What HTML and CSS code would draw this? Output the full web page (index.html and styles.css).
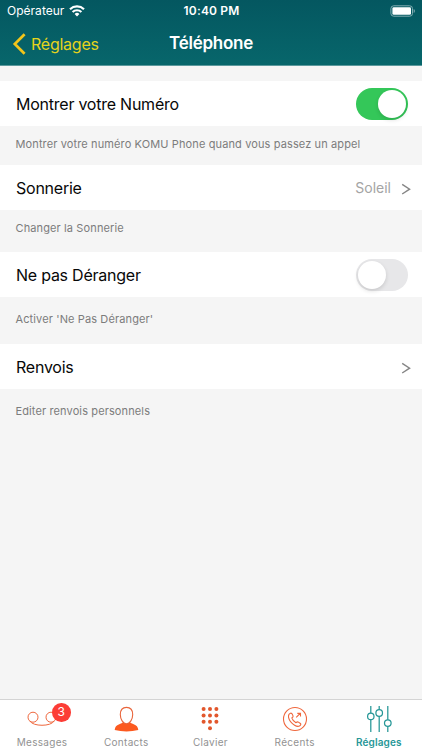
FILE: index.html
```html
<!DOCTYPE html>
<html lang="fr">
<head>
<meta charset="utf-8">
<title>Téléphone</title>
<link rel="stylesheet" href="styles.css">
</head>
<body>
<div class="screen">
  <header class="header">
    <div class="status">
      <div class="carrier"><span>Opérateur</span>
        <svg class="wifi" width="16" height="12" viewBox="0 0 16 12" fill="none" stroke="#fff" stroke-width="2.2"><path d="M1 4.2a10.2 10.2 0 0 1 14 0M3.6 7a6.4 6.4 0 0 1 8.8 0"/><path d="M8 11.4 5.6 9a3.5 3.5 0 0 1 4.8 0z" fill="#fff" stroke="none"/></svg>
      </div>
      <div class="time">10:40 PM</div>
      <svg class="battery" width="26" height="12" viewBox="0 0 26 12"><rect x=".9" y=".8" width="21.6" height="10.4" rx="2.8" fill="none" stroke="#82adb2"/><rect x="2.4" y="2.3" width="18.6" height="7.4" rx="1.3" fill="#fff"/><path d="M23.7 4v4q1.2-.5 1.2-2t-1.2-2z" fill="#82adb2"/></svg>
    </div>
    <nav class="navbar">
      <div class="back"><svg width="14" height="22" viewBox="0 0 14 22"><path d="M12.6 1.2 2.8 11 12.6 20.8" fill="none" stroke="#f2c51a" stroke-width="2.7"/></svg><span>Réglages</span></div>
      <h1 class="title">Téléphone</h1>
      <div></div>
    </nav>
  </header>
  <main class="content">
    <section class="group">
      <div class="row"><span class="label">Montrer votre Numéro</span><span class="switch on"><i></i></span></div>
      <p class="note">Montrer votre numéro KOMU Phone quand vous passez un appel</p>
    </section>
    <section class="group ring">
      <div class="row"><span class="label">Sonnerie</span><span class="value">Soleil</span><svg class="chevron" width="10" height="12" viewBox="0 0 10 12"><path d="M1.2 1.4 8.6 6.2 1.2 11" fill="none" stroke="#858585" stroke-width="1.4"/></svg></div>
      <p class="note">Changer la Sonnerie</p>
    </section>
    <section class="group dnd">
      <div class="row"><span class="label">Ne pas Déranger</span><span class="switch"><i></i></span></div>
      <p class="note">Activer 'Ne Pas Déranger'</p>
    </section>
    <section class="group forward">
      <div class="row"><span class="label">Renvois</span><svg class="chevron" width="10" height="12" viewBox="0 0 10 12"><path d="M1.2 1.4 8.6 6.2 1.2 11" fill="none" stroke="#858585" stroke-width="1.4"/></svg></div>
      <p class="note">Editer renvois personnels</p>
    </section>
  </main>
  <footer class="tabs">
    <div class="tab">
      <svg width="30" height="28" viewBox="0 0 30 28" fill="none" stroke="#ef673d" stroke-width="1"><circle cx="6" cy="13.2" r="5"/><circle cx="24" cy="13.2" r="5"/><path d="M2.8 17C6 22.7 24 22.7 27.2 17"/></svg>
      <span class="badge">3</span><span class="tab-label">Messages</span>
    </div>
    <div class="tab">
      <svg width="26" height="28" viewBox="0 0 26 28"><path d="M10.3 17.5C9.5 20.5 2 19.5 1.7 26q5.5 1.4 11.8 1.4T25.3 26c-.3-6.5-7.8-5.5-8.6-8.5z" fill="#fc5a20"/><path d="M13.5 3.4c-4.3 0-6.2 3.1-6.2 7.2 0 4.6 2.7 9.1 6.2 9.1s6.2-4.5 6.2-9.1c0-4.1-1.9-7.2-6.2-7.2z" fill="#fff" stroke="#e9653b" stroke-width="1.1"/></svg>
      <span class="tab-label">Contacts</span>
    </div>
    <div class="tab">
      <svg width="20" height="28" viewBox="0 0 20 28" fill="#e2572c"><circle cx="3.6" cy="5" r="2"/><circle cx="10" cy="5" r="2"/><circle cx="16.4" cy="5" r="2"/><circle cx="3.6" cy="11.4" r="2"/><circle cx="10" cy="11.4" r="2"/><circle cx="16.4" cy="11.4" r="2"/><circle cx="3.6" cy="17.8" r="2"/><circle cx="10" cy="17.8" r="2"/><circle cx="16.4" cy="17.8" r="2"/><circle cx="10" cy="24.2" r="2"/></svg>
      <span class="tab-label">Clavier</span>
    </div>
    <div class="tab">
      <svg width="26" height="28" viewBox="0 0 26 28" fill="none" stroke="#ef673d" stroke-width="1.1"><circle cx="13" cy="15" r="11.5"/><path d="M7 10.3q1.5-2 3.1-.5l1 2.3q.2 1-1.3 1.8 1 3.2 4.2 4.8 1.4-1.3 2.4-.6l2 1.4q1 1-.6 2.3-2.2 1.5-5.2-.6-4.8-2.8-6-7.6-.4-1.8.4-3.3z"/><path d="m14.2 13.4 4-4M15.3 9.4h3.2v3.2"/></svg>
      <span class="tab-label">Récents</span>
    </div>
    <div class="tab active">
      <svg width="26" height="28" viewBox="0 0 26 28" fill="#fff" stroke="#269797" stroke-width="1.25"><path d="M4.8 2v26M13.2 2v26M21.8 2v26"/><circle cx="4.8" cy="12.4" r="3.2"/><circle cx="13.2" cy="9" r="3.3"/><circle cx="21.8" cy="19.1" r="3.3"/></svg>
      <span class="tab-label">Réglages</span>
    </div>
  </footer>
</div>
</body>
</html>
```
FILE: styles.css
```css
* { box-sizing: border-box; }
body { margin: 0; font-family: Inter, "Liberation Sans", sans-serif; }
svg { display: block; flex: none; }
.screen { width: 422px; height: 750px; display: flex; flex-direction: column; background: #f5f5f5; overflow: hidden; }
.header { height: 66px; flex: none; background: linear-gradient(#045760, #07666b); border-bottom: 1px solid #5b999d; color: #fff; }
.status { height: 22px; display: grid; grid-template-columns: 1fr auto 1fr; align-items: center; padding: 0 6px 0 7px; font-size: 12px; line-height: 22px; }
.carrier { display: flex; align-items: center; gap: 5px; letter-spacing: .02px; }
.time { font-weight: 600; letter-spacing: .15px; }
.battery { justify-self: end; margin-top: -1px; }
.navbar { height: 43px; display: grid; grid-template-columns: 1fr auto 1fr; align-items: center; padding: 0 12px; }
.back { display: flex; align-items: center; gap: 5px; color: #e5d31b; font-size: 16px; letter-spacing: -.24px; }
.title { margin: -2px 0 0; font-size: 17px; font-weight: 600; letter-spacing: -.25px; }
.content { flex: 1; padding-top: 15px; }
.group { height: 84px; }
.group.ring { height: 87px; }
.group.dnd { height: 92px; }
.row { height: 45px; display: flex; align-items: center; padding: 0 11px 0 16px; background: #fff; }
.label { flex: 1; font-size: 16px; letter-spacing: -.24px; color: #080808; }
.value { font-size: 14px; color: #a4a4a4; margin-right: 10px; }
.chevron { margin-top: 3px; }
.switch { width: 52px; height: 32px; margin-right: 3.5px; border-radius: 16px; background: #e7e7e9; padding: 2px; display: flex; }
.switch i { width: 28px; height: 28px; border-radius: 50%; background: #fff; box-shadow: 0 2px 4px #0002; }
.switch.on { background: #34c759; justify-content: flex-end; }
.note { margin: 0; padding: 11px 16px 0 15.5px; font-size: 11px; line-height: 15px; letter-spacing: .12px; color: #7c7c7c; white-space: nowrap; }
.dnd .note { padding-top: 15px; }
.forward .note { padding-top: 15px; }
.tabs { height: 51px; flex: none; border-top: 1px solid #d4d4d4; background: #fff; display: grid; grid-template-columns: repeat(5, 84.2px); }
.tab { position: relative; display: flex; flex-direction: column; align-items: center; padding-top: 4px; }
.tab-label { margin-top: 3px; font-size: 10px; line-height: 14px; letter-spacing: .3px; color: #929292; }
.active .tab-label { color: #269797; font-weight: 600; letter-spacing: .15px; }
.badge { position: absolute; left: 52px; top: 3px; width: 18.5px; height: 18.5px; border-radius: 50%; background: #fc3d36; color: #fff; font-size: 12px; line-height: 18px; text-align: center; }
```
